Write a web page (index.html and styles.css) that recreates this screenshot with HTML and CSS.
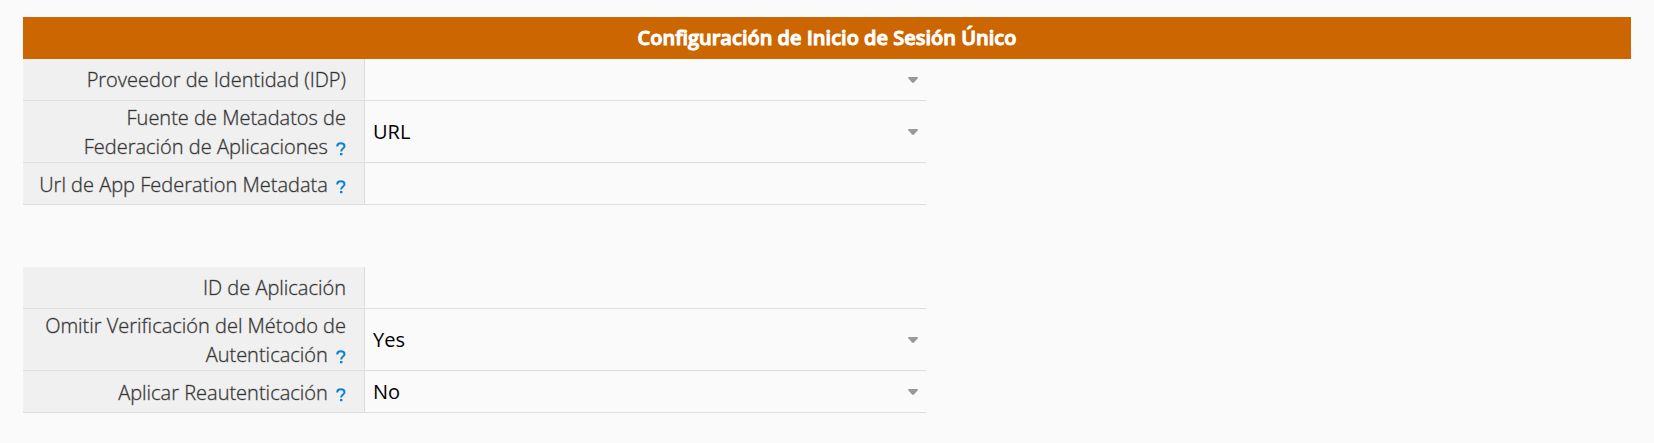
FILE: index.html
```html
<!DOCTYPE html>
<html lang="es">
<head>
<meta charset="utf-8">
<meta name="viewport" content="width=device-width, initial-scale=1">
<title>Configuración de Inicio de Sesión Único</title>
<link rel="stylesheet" href="styles.css">
</head>
<body>
<svg class="sprite" aria-hidden="true">
  <symbol id="caret" viewBox="0 0 10 6"><path d="M1 0h8q1 0 1 1L6 5.500q-1 .8-2 0L0 1q0-1 1-1z"/></symbol>
  <symbol id="help" viewBox="0 0 10 14"><path d="M1.200 4.400C1.200 2.400 2.800 1.200 4.800 1.200S8.500 2.400 8.500 4.200C8.500 6.500 5.200 6.600 5.200 9.400" fill="none" stroke="currentColor" stroke-width="2"/><rect x="4" y="11" width="2.400" height="2.200" fill="currentColor"/></symbol>
</svg>
<main class="page">
  <h1 class="title">Configuración de Inicio de Sesión Único</h1>
  <form class="form">
    <div class="group">
      <div class="row">
        <div class="caption"><label for="idp">Proveedor de Identidad (IDP)</label></div>
        <div class="value"><select class="control" id="idp"><option selected></option></select><svg class="caret"><use href="#caret"/></svg></div>
      </div>
      <div class="row">
        <div class="caption with-help"><span><label for="source">Fuente de Metadatos de Federación de Aplicaciones</label> <button class="help" type="button" aria-label="Ayuda"><svg class="help-icon"><use href="#help"/></svg></button></span></div>
        <div class="value"><select class="control" id="source"><option selected>URL</option></select><svg class="caret"><use href="#caret"/></svg></div>
      </div>
      <div class="row">
        <div class="caption with-help"><span><label for="url">Url de App Federation Metadata</label> <button class="help" type="button" aria-label="Ayuda"><svg class="help-icon"><use href="#help"/></svg></button></span></div>
        <div class="value"><input class="control" id="url" type="text"></div>
      </div>
    </div>
    <div class="group">
      <div class="row">
        <div class="caption"><label for="appid">ID de Aplicación</label></div>
        <div class="value"><input class="control" id="appid" type="text"></div>
      </div>
      <div class="row">
        <div class="caption with-help"><span><label for="skip">Omitir Verificación del Método de Autenticación</label> <button class="help" type="button" aria-label="Ayuda"><svg class="help-icon"><use href="#help"/></svg></button></span></div>
        <div class="value"><select class="control" id="skip"><option selected>Yes</option><option>No</option></select><svg class="caret"><use href="#caret"/></svg></div>
      </div>
      <div class="row">
        <div class="caption with-help"><span><label for="reauth">Aplicar Reautenticación</label> <button class="help" type="button" aria-label="Ayuda"><svg class="help-icon"><use href="#help"/></svg></button></span></div>
        <div class="value"><select class="control" id="reauth"><option>Yes</option><option selected>No</option></select><svg class="caret"><use href="#caret"/></svg></div>
      </div>
    </div>
  </form>
</main>
</body>
</html>
```

FILE: styles.css
```css
* { box-sizing: border-box; }

body {
  margin: 0;
  background: #fafafa;
  color: #333;
  font: 300 20px/29px "Open Sans", "Noto Sans", sans-serif;
}

.sprite { display: none; }

.page { padding: 17px 23px; }

.title {
  margin: 0;
  padding: 6px 12px 7px;
  background: #cc6600;
  color: #fff;
  font-size: 20px;
  font-weight: 600;
  line-height: 29px;
  text-align: center;
  -webkit-text-stroke: 1px #fff;
}

.form {
  display: flex;
  flex-direction: column;
  gap: 62px;
  width: 56.16%;
}

.row {
  display: flex;
  min-height: 42px;
  border-bottom: 1px solid #ddd;
}

.caption {
  display: flex;
  align-items: center;
  justify-content: flex-end;
  flex: none;
  width: 342px;
  padding: 1px 18px 2px 8px;
  border-right: 1px solid #ddd;
  background: #f0f0f0;
  text-align: right;
  -webkit-text-stroke: 1px rgba(51, 51, 51, 0.3);
}

.with-help {
  padding-top: 2px;
  padding-bottom: 1px;
}

.help {
  padding: 0;
  border: 0;
  margin-left: 3px;
  background: none;
  color: #0e7fd6;
  line-height: 0;
  vertical-align: -2px;
  cursor: pointer;
}

.help-icon { width: 10px; height: 14px; }

.value {
  display: grid;
  flex: 1;
  min-width: 0;
  align-items: center;
}

.control {
  grid-area: 1 / 1;
  width: 100%;
  height: 100%;
  padding: 0 32px 0 8px;
  border: 0;
  border-radius: 0;
  appearance: none;
  background: transparent;
  color: #000;
  font: inherit;
  font-weight: 400;
}

.caret {
  grid-area: 1 / 1;
  justify-self: end;
  width: 10px;
  height: 6px;
  margin-right: 8px;
  fill: #999;
  pointer-events: none;
}
```
